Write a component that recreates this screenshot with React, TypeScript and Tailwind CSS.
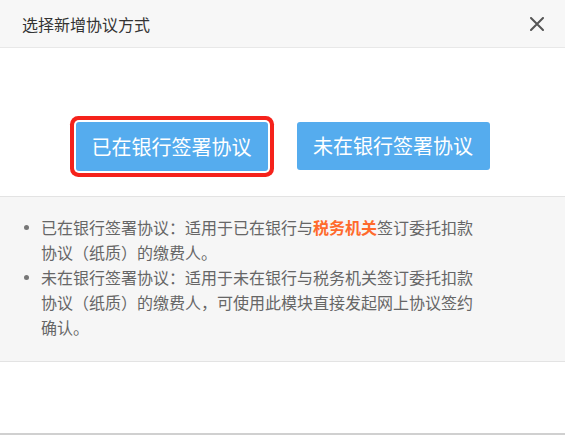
import React from "react";

export default function App() {
  const font = { fontFamily: '"Noto Sans CJK SC", "Noto Sans", sans-serif' };
  return (
    <div className="w-[565px] h-[435px] bg-white flex flex-col overflow-hidden" style={font}>
      <div className="h-[48px] shrink-0 bg-[#f7f7f7] border-b border-[#e8e8e8] flex items-center justify-between pl-[22px] pr-[21px]">
        <span className="text-[16px] text-[#333333] leading-none">选择新增协议方式</span>
        <svg width="14" height="14" viewBox="0 0 14 14" className="text-[#555555]">
          <path d="M1 1 L13 13 M13 1 L1 13" stroke="currentColor" strokeWidth="2" strokeLinecap="round" />
        </svg>
      </div>
      <div className="flex justify-center gap-[29px] pt-[74px] pb-[25px]">
        <button className="w-[192px] h-[49px] rounded-[3px] bg-[#55acee] text-white text-[20px] shadow-[0_0_0_2px_#ffffff,0_0_0_6px_#f5221b]">
          已在银行签署协议
        </button>
        <button className="w-[193px] h-[48px] rounded-[3px] bg-[#55acee] text-white text-[20px]">
          未在银行签署协议
        </button>
      </div>
      <div className="bg-[#f6f6f6] border-y border-[#e3e3e3] pt-[18px] pb-[21px] pl-[24px]">
        <ul className="flex flex-col text-[16px] leading-[25px] text-[#666666]">
          <li className="flex">
            <span className="w-[17px] shrink-0 flex pt-[10px]">
              <span className="w-[5px] h-[5px] rounded-full bg-[#777777]" />
            </span>
            <span className="w-[440px]">
              已在银行签署协议：适用于已在银行与<span className="font-bold text-[#ff6a2c]">税务机关</span>签订委托扣款协议（纸质）的缴费人。
            </span>
          </li>
          <li className="flex">
            <span className="w-[17px] shrink-0 flex pt-[10px]">
              <span className="w-[5px] h-[5px] rounded-full bg-[#777777]" />
            </span>
            <span className="w-[440px]">
              未在银行签署协议：适用于未在银行与税务机关签订委托扣款协议（纸质）的缴费人，可使用此模块直接发起网上协议签约确认。
            </span>
          </li>
        </ul>
      </div>
      <div className="flex-1" />
      <div className="h-[2px] bg-[#d0d0d0]" />
    </div>
  );
}
